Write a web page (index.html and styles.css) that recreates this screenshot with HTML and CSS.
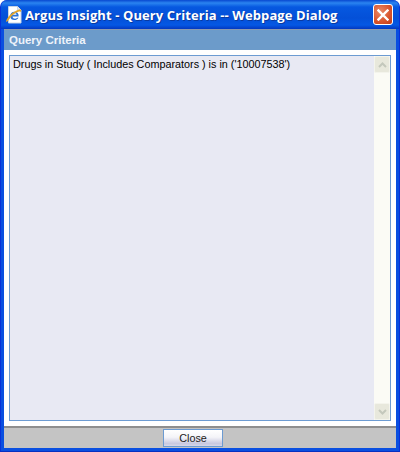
FILE: index.html
```html
<!DOCTYPE html>
<html lang="en">
<head>
<meta charset="utf-8">
<title>Argus Insight - Query Criteria -- Webpage Dialog</title>
<link rel="stylesheet" href="styles.css">
</head>
<body>
<div class="window">
  <div class="titlebar">
    <svg class="app-icon" width="18" height="18" viewBox="0 0 18 18">
      <path d="M3.500 .5h9l3.500 3.500v13H3.500z" fill="#fff" stroke="#c8d4e4"/>
      <path d="M12.500 .5v3.500h3.500" fill="#dfe6ef" stroke="#b8c4d4" stroke-width=".6"/>
      <path d="M5.300 10.500a4.200 4.200 0 1 1 8.300 0H7.500c.2 2.400 3.200 3 4.700 1.200h1.300c-1.800 3.600-8.200 3.100-8.200-1.200z" fill="#2a72d8"/>
      <path d="M7.600 8.700h4c-.2-1.900-3.500-2-4 0z" fill="#fff"/>
      <path d="M1 15.500C2 11 8 5 14.500 3.500 16.500 3 16.500 5 15.800 6 15 4.500 9 7 5.500 11.500 3.500 14 2.500 16.500 1 15.500z" fill="#e3a428"/>
    </svg>
    <span class="title">Argus Insight - Query Criteria -- Webpage Dialog</span>
    <span class="close-x">
      <svg width="12" height="12" viewBox="0 0 12 12"><path d="M1.500 1.500l9 9M10.500 1.500l-9 9" stroke="#fff" stroke-width="2.400" stroke-linecap="square"/></svg>
    </span>
  </div>
  <div class="client">
    <div class="band">Query Criteria</div>
    <div class="body">
      <div class="box">
        <div class="text">Drugs in Study ( Includes Comparators ) is in ('10007538')</div>
        <div class="scrollbar">
          <span class="sb-btn"><svg width="9" height="6" viewBox="0 0 9 6"><path d="M1 5l3.500-3.500L8 5" fill="none" stroke="#c4c8bc" stroke-width="2"/></svg></span>
          <span class="sb-btn"><svg width="9" height="6" viewBox="0 0 9 6"><path d="M1 1l3.500 3.500L8 1" fill="none" stroke="#c4c8bc" stroke-width="2"/></svg></span>
        </div>
      </div>
    </div>
    <div class="footer"><button class="close-btn" type="button">Close</button></div>
  </div>
</div>
</body>
</html>
```
FILE: styles.css
```css
* { box-sizing: border-box; }
html, body { margin: 0; padding: 0; }
body { width: 400px; height: 452px; overflow: hidden; font-family: "Liberation Sans", Arial, sans-serif; }
.window {
  width: 400px; height: 452px; display: flex; flex-direction: column;
  background: #0a4fe0; border-radius: 7px 7px 0 0;
  padding: 0 3px 3px;
  border-left: 1px solid #0831d9; border-right: 1px solid #0831d9; border-bottom: 1px solid #0831c0;
}
.titlebar {
  height: 29px; flex: none; display: flex; align-items: center; margin: 0 -3px;
  padding: 0 6px 0 4px; border-radius: 7px 7px 0 0;
  background: linear-gradient(#0848d0 0, #2a84f0 3px, #0658e0 7px, #0450d8 18px, #0558e4 25px, #0338c0 29px);
}
.app-icon { flex: none; margin-right: 2px; }
.title {
  flex: 1; color: #fff; font: bold 13px "Open Sans", sans-serif; white-space: nowrap; overflow: hidden;
  letter-spacing: .1px; text-shadow: 1px 1px 0 #0a3aa0;
}
.close-x {
  flex: none; width: 20px; height: 21px; border: 1px solid #fff; border-radius: 3px;
  background: radial-gradient(circle at 35% 35%, #e98a68, #d8532c 60%, #c03a18);
  display: flex; align-items: center; justify-content: center;
}
.client { flex: 1; display: flex; flex-direction: column; background: #fff; min-height: 0; border-top: 1px solid #8a9ab0; }
.band {
  height: 20px; flex: none; background: #6c9bca; color: #eef3fa;
  font: bold 11.500px/20px "Liberation Sans", Arial, sans-serif; padding-left: 5px;
}
.body { flex: 1; padding: 5px 5px 5px; min-height: 0; background: #fff; }
.box {
  height: 100%; display: flex; border: 1px solid #6c9bd2; background: #e8e9f3;
}
.text { flex: 1; padding: 2px 3px; font-size: 10.800px; line-height: 13px; color: #000; }
.scrollbar {
  width: 16px; flex: none; background: #fbfbf5; display: flex; flex-direction: column; justify-content: space-between;
}
.sb-btn {
  width: 16px; height: 17px; display: flex; align-items: center; justify-content: center;
  background: #e8e8dc; border: 1px solid #f4f4ec; border-radius: 2px;
}
.footer {
  height: 22px; flex: none; background: #c4c4c4; border-top: 2px solid #8e8e8e;
  display: flex; justify-content: center; align-items: center; padding-right: 14px;
}
.close-btn {
  width: 60px; height: 18px; padding: 0; border: 1px solid #6c9bd2; color: #222;
  background: linear-gradient(#ffffff 0, #f4f4f8 45%, #c8c8e0 85%, #d8d8e8 100%);
  font: 10.800px "Liberation Sans", Arial, sans-serif;
}
```
